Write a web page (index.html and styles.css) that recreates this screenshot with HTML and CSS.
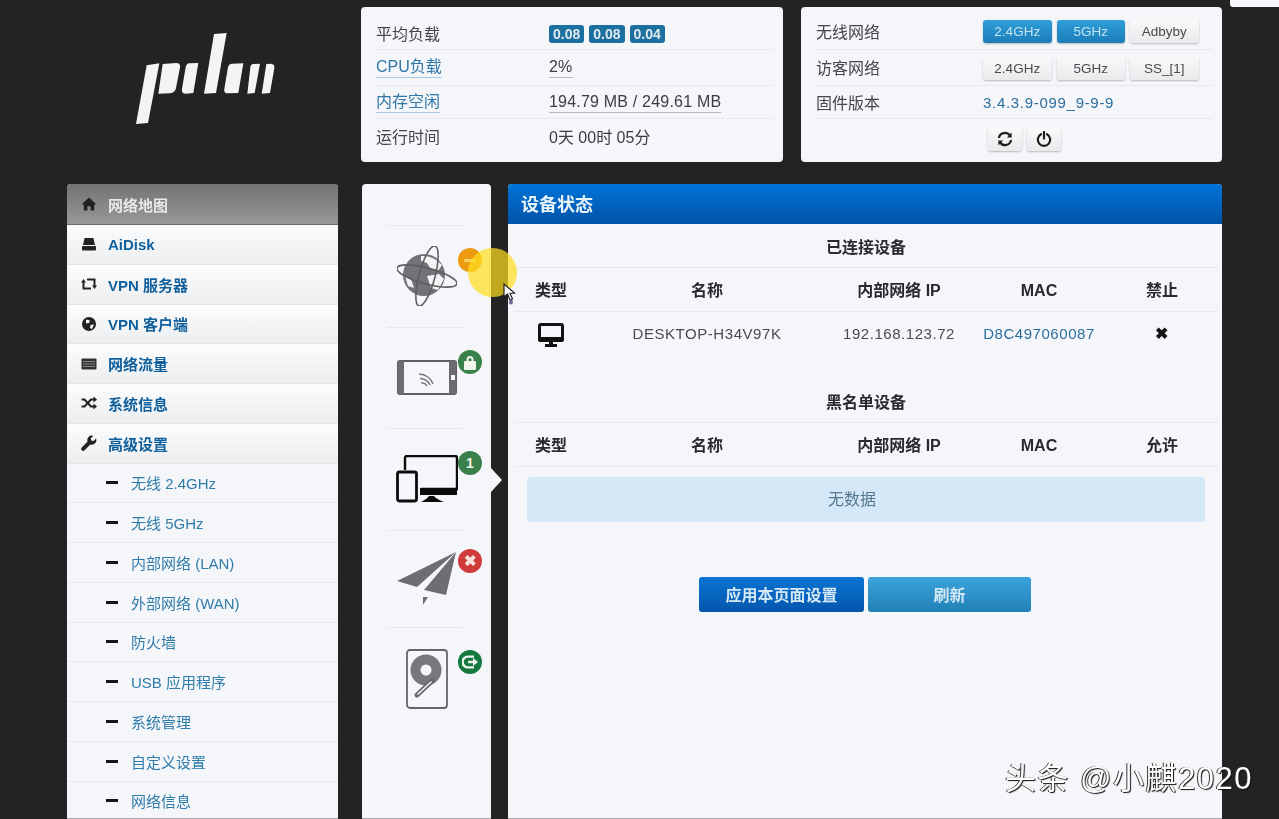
FILE: index.html
```html
<!DOCTYPE html>
<html lang="zh-CN">
<head>
  <meta charset="UTF-8" />
  <meta name="viewport" content="width=device-width, initial-scale=1.0" />
  <title>网络地图</title>
  <link rel="stylesheet" href="styles.css">
</head>
<body>
  <div class="corner-chip"></div>

  <div class="page">
    <header class="top">
      <div class="logo">
        <svg width="150" height="100" viewBox="0 0 450 300" fill="#f4f4f4">
          <polygon points="50,112 88,106 54,285 18,288" />
          <path d="M98,108 L138,105 Q152,105 150,118 L138,180 Q135,195 120,196 L85,197 Z" />
          <path d="M178,106 L205,105 L190,195 L168,197 Q153,197 156,182 L167,118 Q169,107 178,106 Z" />
          <polygon points="252,18 290,15 258,195 222,197" />
          <path d="M306,107 L340,106 L325,195 L295,196 Q280,196 283,182 L294,118 Q296,108 306,107 Z" />
          <path d="M370,108 L390,107 L374,195 L352,197 L361,118 Q362,109 370,108 Z" />
          <path d="M409,108 L422,107 Q435,108 433,120 L420,195 L395,197 Z" />
        </svg>
      </div>

      <section class="panel info">
        <div class="info-row">
          <span class="info-label">平均负载</span>
          <span class="info-value loads"><b class="load">0.08</b><b class="load">0.08</b><b class="load">0.04</b></span>
        </div>
        <div class="info-row">
          <span class="info-label"><a class="link">CPU负载</a></span>
          <span class="info-value"><span class="meter">2%</span></span>
        </div>
        <div class="info-row">
          <span class="info-label"><a class="link">内存空闲</a></span>
          <span class="info-value"><span class="meter">194.79 MB / 249.61 MB</span></span>
        </div>
        <div class="info-row">
          <span class="info-label">运行时间</span>
          <span class="info-value">0天 00时 05分</span>
        </div>
      </section>

      <section class="panel info controls">
        <div class="info-row">
          <span class="info-label">无线网络</span>
          <span class="info-value btns">
            <button class="btn active">2.4GHz</button><button class="btn active">5GHz</button><button class="btn">Adbyby</button>
          </span>
        </div>
        <div class="info-row">
          <span class="info-label">访客网络</span>
          <span class="info-value btns">
            <button class="btn">2.4GHz</button><button class="btn">5GHz</button><button class="btn">SS_[1]</button>
          </span>
        </div>
        <div class="info-row">
          <span class="info-label">固件版本</span>
          <a class="info-value version">3.4.3.9-099_9-9-9</a>
        </div>
        <div class="info-row center">
          <button class="btn icon-btn">
            <svg width="16" height="16" viewBox="0 0 16 16" fill="none" stroke="#1c1c1c" stroke-width="2.2">
              <path d="M2 7 A6 5.6 0 0 1 13 4.5" />
              <path d="M14 9 A6 5.6 0 0 1 3 11.5" />
              <polygon points="14.6,1.6 14.6,6.4 10,6.4" fill="#1c1c1c" stroke="none" />
              <polygon points="1.4,14.4 1.4,9.6 6,9.6" fill="#1c1c1c" stroke="none" />
            </svg>
          </button>
          <button class="btn icon-btn">
            <svg width="16" height="16" viewBox="0 0 16 16" fill="none" stroke="#1c1c1c" stroke-width="2.2" stroke-linecap="round">
              <path d="M5 3.2 A6.2 6.2 0 1 0 11 3.2" />
              <path d="M8 1 V7.6" />
            </svg>
          </button>
        </div>
      </section>
    </header>

    <div class="body">
      <nav class="nav">
        <a class="nav-head">
          <svg class="nav-icon" viewBox="0 0 16 16" fill="#222"><path d="M8 1.5 L15.5 8.5 H13.2 V14.5 H9.6 V10.2 H6.4 V14.5 H2.8 V8.5 H0.5 Z" /></svg>
          网络地图
        </a>
        <a class="nav-item">
          <svg class="nav-icon" viewBox="0 0 16 16" fill="#222"><path d="M3.6 2 H12.4 L14 9 H2 Z" /><rect x="1" y="10" width="14" height="4.5" rx="1" /></svg>
          AiDisk
        </a>
        <a class="nav-item">
          <svg class="nav-icon" viewBox="0 0 16 16" fill="none" stroke="#222" stroke-width="2"><path d="M2.5 6 V12.5 H10" /><path d="M13.5 10 V3.5 H6" /><polygon points="0,6.5 5,6.5 2.5,3" fill="#222" stroke="none" /><polygon points="16,9.5 11,9.5 13.5,13" fill="#222" stroke="none" /></svg>
          VPN 服务器
        </a>
        <a class="nav-item">
          <svg class="nav-icon" viewBox="0 0 16 16"><circle cx="8" cy="8" r="7" fill="#222" /><path d="M5 3.5 L9 4.5 L8 7 L5 7.5 Z M9.5 9 L13 8.5 L11 13 L9 12 Z" fill="#f2f3f5" /></svg>
          VPN 客户端
        </a>
        <a class="nav-item">
          <svg class="nav-icon" viewBox="0 0 16 16"><rect x="0.5" y="2.5" width="15" height="11" rx="1" fill="#333" /><path d="M2 5.5 H14 M2 8 H14 M2 10.5 H14" stroke="#888" /></svg>
          网络流量
        </a>
        <a class="nav-item">
          <svg class="nav-icon" viewBox="0 0 16 16" fill="none" stroke="#222" stroke-width="2"><path d="M0.5 4.5 H3.5 L10 11.5 H13" /><path d="M0.5 11.5 H3.5 L10 4.5 H13" /><polygon points="12.5,1.5 16,4.5 12.5,7.5" fill="#222" stroke="none" /><polygon points="12.5,8.5 16,11.5 12.5,14.5" fill="#222" stroke="none" /></svg>
          系统信息
        </a>
        <a class="nav-item">
          <svg class="nav-icon" viewBox="0 0 16 16" fill="#222"><path d="M15 3.6 L12.6 6 L10.2 5.4 L9.8 3.2 L12.2 0.9 A4.4 4.4 0 0 0 6.6 6.6 L0.8 12.4 A1.9 1.9 0 0 0 3.6 15.2 L9.4 9.4 A4.4 4.4 0 0 0 15 3.6 Z" /></svg>
          高级设置
        </a>
        <a class="nav-sub"><i class="dash"></i>无线 2.4GHz</a>
        <a class="nav-sub"><i class="dash"></i>无线 5GHz</a>
        <a class="nav-sub"><i class="dash"></i>内部网络 (LAN)</a>
        <a class="nav-sub"><i class="dash"></i>外部网络 (WAN)</a>
        <a class="nav-sub"><i class="dash"></i>防火墙</a>
        <a class="nav-sub"><i class="dash"></i>USB 应用程序</a>
        <a class="nav-sub"><i class="dash"></i>系统管理</a>
        <a class="nav-sub"><i class="dash"></i>自定义设置</a>
        <a class="nav-sub"><i class="dash"></i>网络信息</a>
      </nav>

      <aside class="tabs">
        <div class="tab">
          <svg width="60" height="60" viewBox="0 0 60 60" fill="none" stroke="#5f5f62" stroke-width="1.6">
            <circle cx="27" cy="29" r="21" fill="#727376" stroke="none" />
            <path d="M24 10 Q36 9 45 19 L41 25 L33 22 L30 17 L24 15 Z M30 30 L42 28 L47 33 L41 44 L34 42 Z M8 30 L14 33 L17 42 L11 40 Z" fill="#f3f4f6" stroke="none" />
            <ellipse cx="30" cy="30" rx="31" ry="8" transform="rotate(15 30 30)" />
            <ellipse cx="30" cy="30" rx="31" ry="8" transform="rotate(-75 30 30)" />
          </svg>
          <span class="badge orange"><i class="minus"></i></span>
        </div>
        <div class="tab">
          <svg width="60" height="36" viewBox="0 0 60 36">
            <rect x="1" y="1" width="58" height="33" rx="2" fill="none" stroke="#5f5f62" stroke-width="2" />
            <rect x="1" y="1" width="6" height="33" fill="#6c6c70" />
            <rect x="52" y="1" width="7" height="33" fill="#6c6c70" />
            <rect x="54" y="15" width="4" height="5" fill="#f5f6f9" />
            <g fill="none" stroke="#77777b" stroke-width="1.3">
              <path d="M24 23 A6 6 0 0 1 30 26" />
              <path d="M23 18.5 A11 11 0 0 1 33 25" />
              <path d="M22 14 A15 15 0 0 1 36 24" />
            </g>
          </svg>
          <span class="badge green">
            <svg width="14" height="15" viewBox="0 0 14 15" fill="#f1f4ec"><path d="M3.5 6 V4.5 A3.5 3.5 0 0 1 10.5 4.5 V6 H8.5 V4.5 A1.5 1.5 0 0 0 5.5 4.5 V6 Z" /><rect x="1" y="6" width="12" height="9" rx="1" /></svg>
          </span>
        </div>
        <div class="tab">
          <svg width="62" height="48" viewBox="0 0 62 48" fill="none" stroke="#0c0c0c">
            <path d="M9 15 V3 Q9 1 11 1 H59 Q61 1 61 3 V34 H25" stroke-width="2.4" />
            <rect x="24" y="33" width="37" height="7" fill="#0c0c0c" stroke="none" />
            <rect x="1.5" y="17" width="19" height="29" rx="2" stroke-width="2.8" />
            <path d="M25 47 Q31 44 33 41 H38 Q40 44 48 47 Z" fill="#0c0c0c" stroke="none" />
          </svg>
          <span class="badge green"><b>1</b></span>
        </div>
        <div class="tab">
          <svg width="60" height="54" viewBox="0 0 60 54" fill="#6d6e71">
            <polygon points="59,0 0,29 20,35" />
            <polygon points="59,0 27,38 49,43" />
            <polygon points="26,45 31,45 26,53" />
          </svg>
          <span class="badge red"><b class="times">✖</b></span>
        </div>
        <div class="tab">
          <svg width="42" height="60" viewBox="0 0 42 60">
            <rect x="1" y="1" width="40" height="58" rx="3" fill="none" stroke="#66666a" stroke-width="1.8" />
            <circle cx="20" cy="21" r="15.5" fill="#77787b" />
            <circle cx="20" cy="21" r="5.5" fill="#f5f6f9" />
            <path d="M26 32 L11 46" stroke="#66666a" stroke-width="5" stroke-linecap="round" />
            <path d="M25 33 L12 45" stroke="#f5f6f9" stroke-width="1.6" stroke-linecap="round" />
          </svg>
          <span class="badge dark-green">
            <svg width="16" height="14" viewBox="0 0 16 14" fill="none" stroke="#eef5ee" stroke-width="2.4"><path d="M12 1.6 H6 A5 5 0 0 0 6 12.4 H12" /><path d="M6 7 H13" /><polygon points="11,3 16,7 11,11" fill="#eef5ee" stroke="none" /></svg>
          </span>
        </div>
        <i class="tab-arrow"></i>
      </aside>

      <main class="main">
        <h1 class="main-title">设备状态</h1>

        <table class="devices">
          <colgroup><col class="c-type"><col class="c-name"><col class="c-ip"><col class="c-mac"><col class="c-act"></colgroup>
          <thead>
            <tr><th colspan="5" class="caption">已连接设备</th></tr>
            <tr><th>类型</th><th>名称</th><th>内部网络 IP</th><th>MAC</th><th>禁止</th></tr>
          </thead>
          <tbody>
            <tr>
              <td>
                <svg width="26" height="25" viewBox="0 0 26 25" fill="#111">
                  <path d="M3 0 H23 Q26 0 26 3 V17 Q26 19 23 19 H15 V21 H19 V24 H7 V21 H11 V19 H3 Q0 19 0 17 V3 Q0 0 3 0 Z M3 3 V14 H23 V3 Z" fill-rule="evenodd" />
                </svg>
              </td>
              <td>DESKTOP-H34V97K</td>
              <td>192.168.123.72</td>
              <td><a class="mac">D8C497060087</a></td>
              <td><b class="ban">✖</b></td>
            </tr>
          </tbody>
        </table>

        <table class="devices second">
          <colgroup><col class="c-type"><col class="c-name"><col class="c-ip"><col class="c-mac"><col class="c-act"></colgroup>
          <thead>
            <tr><th colspan="5" class="caption">黑名单设备</th></tr>
            <tr><th>类型</th><th>名称</th><th>内部网络 IP</th><th>MAC</th><th>允许</th></tr>
          </thead>
        </table>

        <div class="empty">无数据</div>

        <div class="actions">
          <button class="action primary">应用本页面设置</button>
          <button class="action info-btn">刷新</button>
        </div>
      </main>
    </div>
  </div>

  <div class="spot"></div>
  <svg class="cursor" width="13" height="22" viewBox="0 0 13 22">
    <path d="M1 1 L1 14 L4.5 11 L7 17 L9.5 16 L7 10.5 L11.5 10 Z" fill="#fff" stroke="#222" stroke-width="1.2" />
    <ellipse cx="8" cy="19" rx="2" ry="2.6" fill="#6d6a9c" />
  </svg>
  <div class="watermark">头条 @小麒2020</div>
</body>
</html>
```

FILE: styles.css
```css
* {
  box-sizing: border-box;
}
html, body {
  margin: 0;
  height: 819px;
  overflow: hidden;
}
body {
  background-color: #232323;
  color: #3c3c40;
  font-family: "Liberation Sans", "Noto Sans CJK SC", sans-serif;
  font-size: 16px;
}
a {
  text-decoration: none;
}
button {
  font-family: inherit;
}
.page {
  padding: 7px 57px 0 67px;
  filter: blur(0.4px);
}

/* top row */
.top {
  display: flex;
  height: 155px;
  margin-bottom: 22px;
}
.logo {
  width: 294px;
  flex: none;
  padding: 21px 0 0 63px;
}
.logo svg {
  display: block;
}
.panel {
  background: #f5f6f9;
  border-radius: 4px;
}
.info {
  width: 422px;
  flex: none;
  padding: 9px 10px 0 15px;
}
.info.controls {
  width: 421px;
  margin-left: 18px;
}
.info-row {
  display: flex;
  align-items: center;
  height: 33px;
  border-top: 1px solid #e6e8ec;
}
.info-row:first-child {
  border-top: none;
}
.info-row:nth-child(2) {
  height: 36px;
}
.info-row:nth-child(3) {
  height: 33px;
}
.info-row:nth-child(4) {
  height: 35px;
}
.info-row.center {
  justify-content: center;
  gap: 5px;
  padding-left: 20px;
}
.info-label {
  width: 173px;
  flex: none;
  color: #45454a;
}
.controls .info-row:first-child .info-label {
  margin-top: -4px;
}
.controls .info-row:nth-child(2) .info-label {
  margin-top: -2px;
}
.link {
  display: inline-block;
  color: #2f78a8;
  border-bottom: 1px solid #a9c9de;
  line-height: 20px;
}
.info-value {
  display: flex;
  gap: 5px;
  align-items: center;
}
.loads {
  margin-top: 2px;
}
.load {
  background: #1d6f9f;
  color: #dfe9f0;
  font-size: 14px;
  line-height: 18px;
  padding: 0 4px;
  border-radius: 3px;
}
.meter {
  border-bottom: 1px solid #b5b8be;
  line-height: 20px;
  letter-spacing: 0.2px;
}
.btns {
  margin-left: -6px;
  margin-top: -3px;
}
.info-row:nth-child(2) .btns {
  margin-top: 2px;
}
.btn {
  width: 68.5px;
  height: 23px;
  padding: 0;
  border: none;
  border-radius: 3px;
  background: linear-gradient(#f9f9fa, #e9eaec);
  box-shadow: 0 1px 2px rgba(0,0,0,0.25);
  color: #4a4a4e;
  font-size: 13.5px;
}
.btn.active {
  background: linear-gradient(#2f9fd8, #1b7db8);
  color: #c3e2f2;
}
.version {
  color: #2a6f9e;
  letter-spacing: 0.7px;
  margin-left: -6px;
  font-size: 15px;
}
.icon-btn {
  width: 34px;
  display: flex;
  align-items: center;
  justify-content: center;
  margin-top: 6px;
}
.corner-chip {
  position: absolute;
  top: 0;
  right: 0;
  width: 49px;
  height: 7px;
  background: #f5f6f9;
  border-bottom-left-radius: 3px;
}

/* lower row */
.body {
  display: flex;
  height: 635px;
}
.nav {
  width: 271px;
  flex: none;
  margin-right: 24px;
  background: #f5f6f9;
  border-radius: 4px 4px 0 0;
  overflow: hidden;
  border-bottom: 1px solid #a5a7ab;
}
.nav-head {
  display: flex;
  align-items: center;
  height: 41px;
  padding-left: 14px;
  background: linear-gradient(#717375, #96989a);
  border-bottom: 1px solid #6c6e70;
  color: #e9e9ea;
  font-size: 15px;
  font-weight: bold;
}
.nav-icon {
  width: 16px;
  height: 16px;
  margin-right: 11px;
  flex: none;
}
.nav-item {
  display: flex;
  align-items: center;
  height: 39.75px;
  padding-left: 14px;
  background: linear-gradient(#fbfcfe, #eceef0);
  border-bottom: 1px solid #e4e6e9;
  color: #0f5f9c;
  font-size: 15px;
  font-weight: bold;
}
.nav-sub {
  display: flex;
  align-items: center;
  height: 39.75px;
  padding-left: 39px;
  border-bottom: 1px solid #e8eaed;
  color: #2f7cab;
  font-size: 15px;
}
.dash {
  width: 12px;
  height: 3px;
  margin-right: 13px;
  background: #151515;
}
.tabs {
  position: relative;
  display: grid;
  grid-template-rows: 102px 101px 102px 97px 103px;
  align-content: start;
  width: 129px;
  flex: none;
  margin-right: 17px;
  padding-top: 41px;
  background: #f5f6f9;
  border-radius: 4px 4px 0 0;
  border-bottom: 1px solid #a5a7ab;
}
.tab {
  position: relative;
  display: flex;
  align-items: center;
  justify-content: center;
}
.tab::before {
  content: "";
  position: absolute;
  top: 0;
  left: 25px;
  width: 76px;
  height: 1px;
  background: #e8e9ec;
}
.badge {
  position: absolute;
  top: 23px;
  right: 9px;
  width: 24px;
  height: 24px;
  border-radius: 50%;
  display: flex;
  align-items: center;
  justify-content: center;
  color: #f3f6ee;
  font-size: 14px;
}
.tab:nth-child(4) .badge {
  top: 19px;
}
.orange {
  background: #ec9a10;
}
.green {
  background: #3a804a;
}
.red {
  background: #cf3b3b;
}
.dark-green {
  background: #14793e;
}
.minus {
  width: 12px;
  height: 3px;
  background: #f8d060;
  border-radius: 1px;
}
.times {
  font-size: 15px;
  color: #f7e4dc;
}
.tab-arrow {
  position: absolute;
  left: 129px;
  top: 284px;
  border-left: 11px solid #f5f6f9;
  border-top: 12px solid transparent;
  border-bottom: 12px solid transparent;
}
.main {
  flex: 1;
  background: #f5f6f9;
  border-radius: 4px 4px 0 0;
  border-bottom: 1px solid #a5a7ab;
}
.main-title {
  margin: 0;
  height: 40px;
  padding-left: 13px;
  background: linear-gradient(#0074d9, #0053a8);
  border-radius: 4px 4px 0 0;
  color: #e8f2fa;
  font-size: 18px;
  font-weight: bold;
  line-height: 42px;
}
.devices {
  width: 702px;
  margin-left: 7px;
  border-collapse: collapse;
  table-layout: fixed;
  color: #2a2a2e;
}
.devices.second {
  margin-top: 23px;
}
.devices th {
  height: 43.5px;
  padding: 4px 0 0;
  font-size: 16px;
  font-weight: bold;
  line-height: 24px;
  border-bottom: 1px solid #e8e9ec;
}
.devices td {
  height: 45px;
  padding: 0;
  text-align: center;
  letter-spacing: 0.55px;
  color: #4a4a50;
  font-size: 15px;
}
.devices svg {
  display: block;
  margin: 3px auto 0;
}
.c-type { width: 72px; }
.c-name { width: 240px; }
.c-ip { width: 144px; }
.c-mac { width: 136px; }
.c-act { width: 110px; }
.mac {
  color: #2b6f9e;
}
.ban {
  color: #151515;
  font-size: 16px;
}
.empty {
  height: 45px;
  margin: 10px 17px 0 19px;
  padding-right: 28px;
  background: #d5e8f8;
  border-radius: 4px;
  color: #55788f;
  font-size: 16px;
  line-height: 45px;
  text-align: center;
}
.actions {
  display: flex;
  justify-content: center;
  gap: 4px;
  margin-top: 55px;
}
.action {
  height: 35px;
  border: none;
  border-radius: 3px;
  color: #d5e8f6;
  font-size: 16px;
  font-weight: bold;
}
.primary {
  width: 165px;
  background: linear-gradient(#0a74d4, #0456ac);
}
.info-btn {
  width: 163px;
  background: linear-gradient(#3ba3db, #2180b6);
}

/* recording overlays */
.spot {
  position: absolute;
  left: 468px;
  top: 248px;
  width: 49px;
  height: 49px;
  border-radius: 50%;
  background: rgba(255,222,30,0.72);
}
.cursor {
  position: absolute;
  left: 503px;
  top: 283px;
}
.watermark {
  position: absolute;
  left: 1005px;
  top: 753px;
  color: #fff;
  font-size: 31px;
  letter-spacing: 1.5px;
  white-space: nowrap;
  text-shadow: 1px 1px 1px #111, -1px 0 0 #333;
}
```
